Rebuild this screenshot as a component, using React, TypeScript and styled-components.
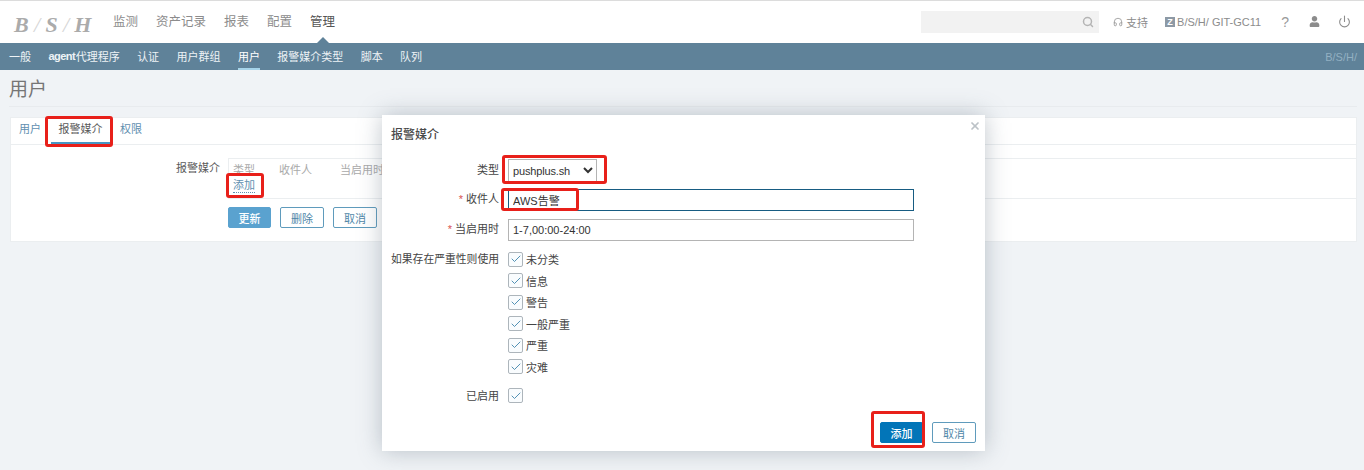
import React from "react";
import styled, { createGlobalStyle } from "styled-components";
import { Check, Headphones, Power, Search, X } from "lucide-react";
import { FaUser } from "react-icons/fa";

const GlobalStyle = createGlobalStyle`
  html, body {
    margin: 0;
    padding: 0;
    background: #f0f3f6;
  }
  body {
    font-family: "Liberation Sans", "Noto Sans CJK SC", sans-serif;
    font-size: 11px;
    color: #3c3c3c;
  }
`;

const Page = styled.div`
  position: relative;
  width: 1364px;
  height: 470px;
  overflow: hidden;
  background: #f0f3f6;
`;

const TopBar = styled.header`
  height: 42px;
  border-top: 1px solid #dcdcdc;
  background: #fff;
  display: flex;
  align-items: center;
  padding: 0 13px 0 14px;
`;

const Logo = styled.div`
  width: 99px;
  padding-top: 6px;
  font-family: "Liberation Serif", serif;
  font-style: italic;
  font-weight: 700;
  font-size: 22px;
  color: #ababab;
  white-space: pre;
  letter-spacing: -0.1px;

  span {
    color: #d6d6d6;
    font-weight: 400;
  }
`;

const MainNav = styled.nav`
  display: flex;
  gap: 18px;
  flex: 1;
`;

const MainItem = styled.a<{ $active?: boolean }>`
  position: relative;
  font-size: 12.5px;
  line-height: 20px;
  color: ${(p) => (p.$active ? "#555" : "#8c8c8c")};

  ${(p) =>
    p.$active &&
    `&::after {
      content: "";
      position: absolute;
      left: 50%;
      bottom: -12px;
      margin-left: -7px;
      border-left: 7px solid transparent;
      border-right: 7px solid transparent;
      border-bottom: 7px solid #5f8299;
    }`}
`;

const SearchBox = styled.div`
  width: 178px;
  height: 22px;
  background: #f2f2f2;
  margin-top: -1px;
  display: flex;
  align-items: center;
  justify-content: flex-end;
  padding-right: 5px;
  box-sizing: border-box;
  color: #b4b4b4;
`;

const HeaderLink = styled.a<{ $offset: number }>`
  display: flex;
  align-items: center;
  gap: 3px;
  margin: -1px 0 0 ${(p) => p.$offset}px;
  color: #8c8c8c;
  font-size: 11px;
  white-space: nowrap;
`;

const ZMark = styled.span`
  width: 10px;
  height: 10px;
  background: #8d99a5;
  color: #fff;
  font-size: 9px;
  font-weight: 700;
  line-height: 10px;
  text-align: center;
  margin-right: -1px;
`;

const HeaderTools = styled.div`
  display: flex;
  align-items: center;
`;

const HelpMark = styled.span`
  font-size: 14px;
  color: #9a9a9a;
  margin: -1px 0 0 20px;
`;

const SubNav = styled.nav`
  height: 27px;
  background: #5f8299;
  display: flex;
  align-items: stretch;
  padding: 0 7px 0 9px;
  gap: 17.4px;
`;

const SubItem = styled.a<{ $active?: boolean }>`
  display: flex;
  align-items: center;
  height: 25px;
  font-size: 11px;
  font-weight: 400;
  color: ${(p) => (p.$active ? "#fff" : "#eef3f6")};
  border-bottom: 2px solid ${(p) => (p.$active ? "#a6d4e9" : "transparent")};

  b {
    letter-spacing: -0.5px;
    margin-right: 0.5px;
  }
`;

const ServerName = styled.span`
  margin-left: auto;
  align-self: center;
  color: #93b0c2;
  font-size: 11px;
`;

const Title = styled.h1`
  margin: 0 7px 0 9px;
  height: 36px;
  border-bottom: 1px solid #e8ebee;
  font-size: 19px;
  font-weight: 400;
  line-height: 39px;
  color: #757575;
`;

const Card = styled.section`
  position: relative;
  margin: 10px 7px 0 10px;
  height: 125px;
  box-sizing: border-box;
  background: #fff;
  border: 1px solid #ebeef0;
`;

const Tabs = styled.div`
  height: 26px;
  display: flex;
  gap: 1.5px;
  border-bottom: 1px solid #ebeef0;
`;

const Tab = styled.a<{ $active?: boolean }>`
  height: 24px;
  padding: 0 8px;
  line-height: 23px;
  font-size: 11px;
  color: ${(p) => (p.$active ? "#5a5a5a" : "#5f8fb0")};
  border-bottom: 2px solid ${(p) => (p.$active ? "#4796c4" : "transparent")};
`;

const MediaRow = styled.div`
  display: grid;
  grid-template-columns: 209px 1fr;
  gap: 8px;
  padding-top: 13px;
`;

const FieldName = styled.div`
  text-align: right;
  line-height: 20px;
  color: #5a5a5a;
`;

const MediaTable = styled.div`
  height: 41px;
  box-sizing: border-box;
  border: 1px solid #ebeef0;
  border-right: 0;
  padding: 3px 4px 0;
`;

const MediaHead = styled.div`
  display: flex;
  height: 16px;
  line-height: 17px;
  color: #a9a9a9;
`;

const HeadCell = styled.span<{ $width: number }>`
  width: ${(p) => p.$width}px;
  white-space: nowrap;
`;

const AddLink = styled.a`
  color: #5f8fb0;
  border-bottom: 1px dotted #5f8fb0;
  line-height: 14px;
  display: inline-block;
`;

const CardActions = styled.div`
  display: flex;
  gap: 9px;
  margin: 8px 0 0 217px;
`;

const Button = styled.button<{ $primary?: "soft" | "solid" }>`
  width: ${(p) => (p.$primary ? "43px" : "44px")};
  height: 21px;
  padding: 0;
  box-sizing: border-box;
  border-radius: 2px;
  border: 1px solid
    ${(p) =>
      p.$primary === "soft" ? "#5aa2cf" : p.$primary === "solid" ? "#0275b8" : "#5f9bbc"};
  background: ${(p) =>
    p.$primary === "soft" ? "#5aa2cf" : p.$primary === "solid" ? "#0275b8" : "#fff"};
  color: ${(p) => (p.$primary ? "#fff" : "#4f87a8")};
  font: inherit;
  font-size: 11px;
  font-weight: ${(p) => (p.$primary ? 500 : 400)};
`;

const Modal = styled.div`
  position: absolute;
  left: 382px;
  top: 115px;
  width: 603px;
  height: 336px;
  box-sizing: border-box;
  background: #fff;
  box-shadow: 0 0 22px rgba(90, 105, 120, 0.38);
  padding: 13px 9px 0;
`;

const ModalTitle = styled.h2`
  margin: 0;
  height: 31px;
  font-size: 12px;
  line-height: 14px;
  font-weight: 500;
  color: #4a4a4a;
`;

const CloseMark = styled.span`
  position: absolute;
  top: 5px;
  right: 4px;
  color: #bcc2c7;
  display: flex;
`;

const ModalForm = styled.div`
  display: grid;
  grid-template-columns: 108px 406px;
  column-gap: 9px;
  align-items: start;
`;

const Label = styled.label<{ $rowHeight: number; $tight?: boolean }>`
  text-align: right;
  line-height: ${(p) => p.$rowHeight}px;
  color: #444;
  white-space: nowrap;
  font-size: ${(p) => (p.$tight ? "10.8px" : "11px")};

  i {
    color: #d9534f;
    font-style: normal;
    margin-right: 3px;
  }
`;

const Control = styled.div<{ $gap: number }>`
  margin-bottom: ${(p) => p.$gap}px;
`;

const SelectField = styled.select`
  display: block;
  width: 89px;
  height: 23px;
  box-sizing: border-box;
  border: 1px solid #b4b4b4;
  background: #fff;
  color: #333;
  font: inherit;
  font-size: 11px;
  letter-spacing: -0.15px;
  padding: 0;
`;

const TextField = styled.input<{ $focused?: boolean }>`
  display: block;
  width: 100%;
  height: 22px;
  box-sizing: border-box;
  border: 1px solid ${(p) => (p.$focused ? "#175c82" : "#b4b4b4")};
  background: #fff;
  color: #333;
  font: inherit;
  font-size: 11px;
  padding: 0 4px;
  outline: 0;
`;

const CheckList = styled.div`
  display: flex;
  flex-direction: column;
  gap: 6.5px;
`;

const CheckRow = styled.div`
  display: flex;
  align-items: center;
  gap: 3px;
  height: 15px;
  color: #444;
`;

const CheckBox = styled.span`
  width: 15px;
  height: 15px;
  box-sizing: border-box;
  border: 1px solid #adb5bb;
  border-radius: 2px;
  background: #f9fcfe;
  color: #3f86ad;
  display: flex;
  align-items: center;
  justify-content: center;
`;

const ModalActions = styled.div`
  position: absolute;
  right: 9px;
  bottom: 8px;
  display: flex;
  gap: 9px;
`;

const Highlight = styled.div<{ $x: number; $y: number; $w: number; $h: number }>`
  position: absolute;
  left: ${(p) => p.$x}px;
  top: ${(p) => p.$y}px;
  width: ${(p) => p.$w}px;
  height: ${(p) => p.$h}px;
  box-sizing: border-box;
  border: 3px solid #e8201a;
  border-radius: 3px;
  pointer-events: none;
`;

const severities = ["未分类", "信息", "警告", "一般严重", "严重", "灾难"];
const mainItems = ["监测", "资产记录", "报表", "配置"];

const Tick = () => (
  <CheckBox>
    <Check size={12} strokeWidth={1.8} />
  </CheckBox>
);

const App: React.FC = () => {
  return (
    <Page>
      <GlobalStyle />
      <TopBar>
        <Logo>
          B <span>/</span> S <span>/</span> H
        </Logo>
        <MainNav>
          {mainItems.map((item) => (
            <MainItem key={item}>{item}</MainItem>
          ))}
          <MainItem $active>管理</MainItem>
        </MainNav>
        <HeaderTools>
          <SearchBox>
            <Search size={12} strokeWidth={3} />
          </SearchBox>
          <HeaderLink $offset={14}>
            <Headphones size={10} strokeWidth={1.8} />
            支持
          </HeaderLink>
          <HeaderLink $offset={17}>
            <ZMark>Z</ZMark>
            B/S/H/ GIT-GC11
          </HeaderLink>
          <HelpMark>?</HelpMark>
          <HeaderLink $offset={20}>
            <FaUser size={11} />
          </HeaderLink>
          <HeaderLink $offset={18}>
            <Power size={13} />
          </HeaderLink>
        </HeaderTools>
      </TopBar>
      <SubNav>
        <SubItem>一般</SubItem>
        <SubItem>
          <b>agent</b>代理程序
        </SubItem>
        <SubItem>认证</SubItem>
        <SubItem>用户群组</SubItem>
        <SubItem $active>用户</SubItem>
        <SubItem>报警媒介类型</SubItem>
        <SubItem>脚本</SubItem>
        <SubItem>队列</SubItem>
        <ServerName>B/S/H/</ServerName>
      </SubNav>
      <Title>用户</Title>
      <Card>
        <Tabs>
          <Tab>用户</Tab>
          <Tab $active>报警媒介</Tab>
          <Tab>权限</Tab>
        </Tabs>
        <MediaRow>
          <FieldName>报警媒介</FieldName>
          <MediaTable>
            <MediaHead>
              <HeadCell $width={46}>类型</HeadCell>
              <HeadCell $width={61}>收件人</HeadCell>
              <HeadCell $width={80}>当启用时</HeadCell>
            </MediaHead>
            <AddLink>添加</AddLink>
          </MediaTable>
        </MediaRow>
        <CardActions>
          <Button $primary="soft">更新</Button>
          <Button>删除</Button>
          <Button>取消</Button>
        </CardActions>
      </Card>
      <Highlight $x={45} $y={116} $w={68} $h={31} />
      <Highlight $x={226} $y={173} $w={38} $h={25} />
      <Modal>
        <ModalTitle>报警媒介</ModalTitle>
        <CloseMark>
          <X size={12} strokeWidth={3.4} />
        </CloseMark>
        <ModalForm>
          <Label $rowHeight={23}>类型</Label>
          <Control $gap={7}>
            <SelectField defaultValue="pushplus.sh">
              <option>pushplus.sh</option>
            </SelectField>
          </Control>
          <Label $rowHeight={21}>
            <i>*</i>收件人
          </Label>
          <Control $gap={8}>
            <TextField $focused readOnly value="AWS告警" />
          </Control>
          <Label $rowHeight={21}>
            <i>*</i>当启用时
          </Label>
          <Control $gap={10.5}>
            <TextField readOnly value="1-7,00:00-24:00" />
          </Control>
          <Label $rowHeight={15} $tight>
            如果存在严重性则使用
          </Label>
          <Control $gap={14}>
            <CheckList>
              {severities.map((name) => (
                <CheckRow key={name}>
                  <Tick />
                  {name}
                </CheckRow>
              ))}
            </CheckList>
          </Control>
          <Label $rowHeight={17}>已启用</Label>
          <Control $gap={0}>
            <Tick />
          </Control>
        </ModalForm>
        <ModalActions>
          <Button $primary="solid">添加</Button>
          <Button>取消</Button>
        </ModalActions>
        <Highlight $x={120} $y={40} $w={105} $h={29} />
        <Highlight $x={119} $y={73} $w={78} $h={23} />
        <Highlight $x={489} $y={296} $w={54} $h={37} />
      </Modal>
    </Page>
  );
};

export default App;
